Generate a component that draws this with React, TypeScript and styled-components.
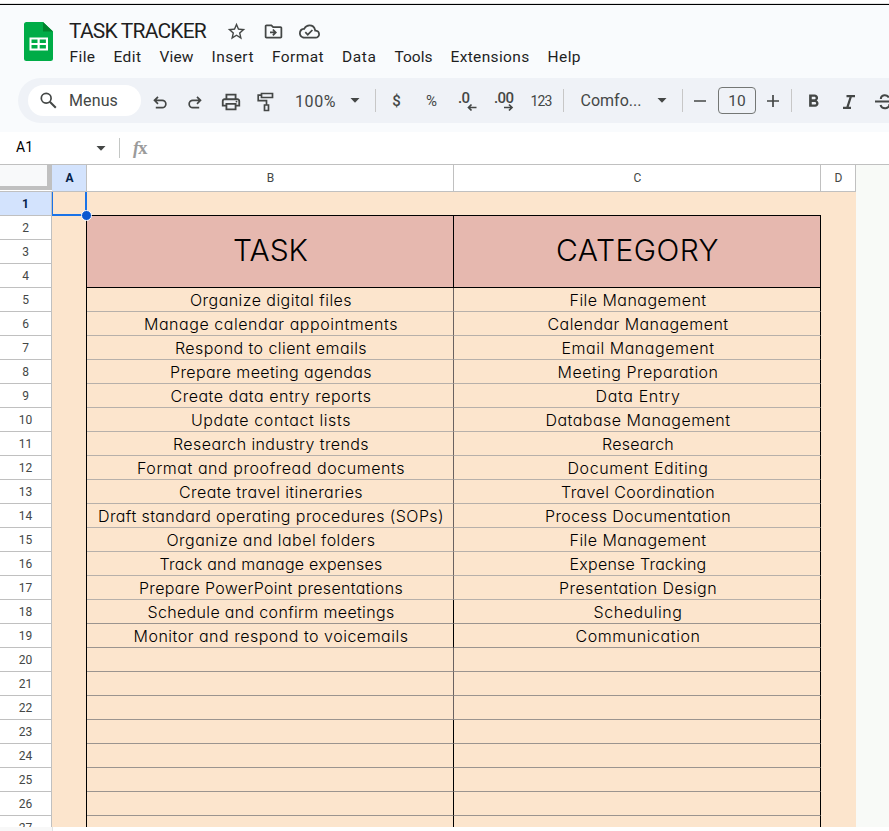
import React, { useLayoutEffect, useRef, useState } from "react";
import styled, { createGlobalStyle } from "styled-components";
import { MdStarBorder, MdOutlineDriveFileMove, MdOutlineCloudDone, MdOutlinePrint, MdFormatBold } from "react-icons/md";

const GlobalStyle = createGlobalStyle`
  * { box-sizing: border-box; }
  body { margin: 0; background: #fff; overflow: hidden; }
  svg { flex: none; overflow: visible; }
`;

const Page = styled.div`
  width: 889px;
  height: 831px;
  overflow: hidden;
  display: flex;
  flex-direction: column;
  background: #fff;
  font-family: Roboto, "Liberation Sans", sans-serif;
  color: #1f1f1f;
`;

const TopEdge = styled.div`
  height: 5px;
  flex: none;
  border-bottom: 1px solid #000;
  background: linear-gradient(#fff 3px, #e2e2e2 3px);
`;

const Header = styled.header`
  height: 127px;
  flex: none;
  background: #f9fbfd;
  display: flex;
  flex-direction: column;
`;

const Brand = styled.div`
  display: flex;
  height: 73px;
  padding-left: 24px;
`;

const Logo = styled.svg`
  width: 29px;
  height: 39px;
  margin: 17px 16px 0 0;
`;

const BrandText = styled.div`
  display: flex;
  flex-direction: column;
`;

const TitleRow = styled.div`
  display: flex;
  align-items: center;
  height: 28px;
  margin-top: 12px;
  font-size: 21px;
  color: #1f1f1f;
`;

const TitleIcon = styled.span<{ $gap: number }>`
  display: flex;
  margin-left: ${(p) => p.$gap}px;
  color: #444746;
`;

const MenuRow = styled.nav`
  display: flex;
  align-items: center;
  height: 22px;
  margin-top: 1px;
  padding-left: 0.5px;
  gap: 18px;
  font-size: 15.5px;
`;

const Toolbar = styled.div`
  display: flex;
  align-items: center;
  height: 45px;
  margin-left: 18px;
  padding-left: 10px;
  border-radius: 23px 0 0 23px;
  background: #eff2f7;
  color: #444746;
  overflow: hidden;
`;

const SearchPill = styled.div`
  display: flex;
  align-items: center;
  flex: none;
  width: 113px;
  height: 31px;
  margin-right: 1px;
  padding-left: 12px;
  gap: 12px;
  border-radius: 16px;
  background: #fff;
  font-size: 16px;
`;

const Slot = styled.div<{ $w: number; $size?: number; $weight?: number; $drop?: number }>`
  display: flex;
  flex: none;
  align-items: center;
  justify-content: center;
  width: ${(p) => p.$w}px;
  height: 30px;
  padding-top: ${(p) => p.$drop ?? 0}px;
  font-size: ${(p) => p.$size ?? 16}px;
  font-weight: ${(p) => p.$weight ?? 400};
`;

const Separator = styled.div<{ $before: number }>`
  flex: none;
  width: 1px;
  height: 23px;
  margin-left: ${(p) => p.$before}px;
  background: #c7c7c7;
`;

const SizeBox = styled.div`
  display: flex;
  flex: none;
  align-items: center;
  justify-content: center;
  width: 38px;
  height: 27px;
  margin-left: 1px;
  border: 1px solid #747775;
  border-radius: 4px;
  font-size: 15.5px;
`;

const FormulaBar = styled.div`
  display: flex;
  align-items: center;
  flex: none;
  height: 33px;
  border-bottom: 1px solid #c0c0c0;
  background: #fff;
`;

const CellName = styled.div`
  width: 80px;
  padding: 0 0 2px 16px;
  font-size: 14px;
  color: #000;
`;

const CaretCell = styled.div`
  display: flex;
  justify-content: center;
  width: 42px;
`;

const BarDivider = styled.div`
  width: 1px;
  height: 20px;
  margin: 0 13px 0 -3px;
  background: #c4c7c5;
`;

const FxMark = styled.div`
  display: flex;
  align-items: baseline;
  font-family: "Liberation Serif", serif;
  font-style: italic;
  font-weight: 700;
  font-size: 18px;
  line-height: 20px;
  color: #9b9b9b;
`;

const FxVariable = styled.span`
  font-style: normal;
  font-size: 19px;
  font-weight: 700;
  margin-left: -1px;
`;

const columns = "52px 35px 367px 367px 35px 1fr";

const ColumnHeads = styled.div`
  display: grid;
  grid-template-columns: ${columns};
  flex: none;
  height: 27px;
  background: #f8faf7;
  font-size: 12px;
`;

const Corner = styled.div`
  display: flex;
  flex-direction: column;
  background: #fff;
  border-bottom: 1px solid #c0c0c0;
`;

const CornerTop = styled.div`
  height: 21px;
  border-right: 5px solid #c0c0c0;
  background: #f8f9fa;
`;

const CornerBar = styled.div`
  height: 4px;
  background: #c0c0c0;
`;

const ColumnHead = styled.div<{ $on?: boolean }>`
  display: flex;
  align-items: center;
  justify-content: center;
  padding-left: 1px;
  border-right: 1px solid #c0c0c0;
  border-bottom: 1px solid #c0c0c0;
  background: ${(p) => (p.$on ? "#d3e3fd" : "#fff")};
  color: ${(p) => (p.$on ? "#041e49" : "#444746")};
  font-weight: ${(p) => (p.$on ? 700 : 400)};
`;

const Sheet = styled.div`
  display: grid;
  grid-template-columns: ${columns};
  grid-template-rows: repeat(27, 24px);
  flex: none;
  height: 635px;
  overflow: hidden;
  background: #f8faf7;
`;

const RowHead = styled.div<{ $row: number }>`
  grid-column: 1;
  grid-row: ${(p) => p.$row};
  display: flex;
  align-items: center;
  justify-content: center;
  border-right: 1px solid #c0c0c0;
  border-bottom: 1px solid #c0c0c0;
  background: ${(p) => (p.$row === 1 ? "#d3e3fd" : "#fff")};
  color: ${(p) => (p.$row === 1 ? "#041e49" : "#444746")};
  font-size: 12px;
  font-weight: ${(p) => (p.$row === 1 ? 700 : 400)};
`;

const Selected = styled.div`
  grid-area: 1 / 2;
  position: relative;
  z-index: 1;
  border: solid #1a73e8;
  border-width: 0 2px 2px 1px;
  background: #fce5cd;
`;

const FillHandle = styled.div`
  position: absolute;
  right: -7px;
  bottom: -7px;
  width: 11px;
  height: 11px;
  border: 1px solid #fff;
  border-radius: 50%;
  background: #0b57d0;
`;

const Margin = styled.div<{ $area: string; $edge?: string }>`
  grid-area: ${(p) => p.$area};
  background: #fce5cd;
  ${(p) => p.$edge && `border-${p.$edge}: 1px solid #000;`}
`;

const HeadingCell = styled.div<{ $col: number }>`
  grid-area: 2 / ${(p) => p.$col} / span 3;
  display: flex;
  align-items: center;
  justify-content: center;
  padding: 0 0 4px 1px;
  border-right: 1px solid #000;
  border-bottom: 1px solid #000;
  background: #e6b8af;
  color: #000;
  font-family: Inter, sans-serif;
  font-size: 30px;
  font-weight: 300;
`;

const Cell = styled.div<{ $row: number; $col: number; $side: string }>`
  grid-area: ${(p) => p.$row} / ${(p) => p.$col};
  display: flex;
  align-items: center;
  justify-content: center;
  padding: 0 0 0 2px;
  border-right: 1px solid ${(p) => p.$side};
  border-bottom: 1px solid ${(p) => (p.$row < 18 ? "#b7b0aa" : "#9b948f")};
  background: #fce5cd;
  color: #000;
  font-family: Inter, sans-serif;
  font-feature-settings: "cv11", "calt" 0;
  font-size: 16px;
  font-weight: 350;
`;

const Footer = styled.div`
  width: 53px;
  height: 4px;
  border-right: 1px solid #e3e3e3;
  background: #f8f8f8;
`;

const Label = styled.span`
  display: inline-block;
  flex: none;
  white-space: pre;
`;

/* A label whose tracking is adjusted so that it spans the given width. */
function Fit({ w, children }: { w: number; children: string }) {
  const ref = useRef<HTMLSpanElement>(null);
  const [track, setTrack] = useState(0);
  useLayoutEffect(() => {
    if (ref.current) setTrack((w - ref.current.getBoundingClientRect().width) / children.length);
  }, [w, children]);
  return <Label ref={ref} style={{ letterSpacing: track }}>{children}</Label>;
}

const Caret = () => (
  <svg width="10" height="5" viewBox="0 0 10 5"><path d="M.5 0h9L5 4.7z" fill="#444746" /></svg>
);

const stroke = { fill: "none", stroke: "#444746", strokeWidth: 1.7 };

const menus: [string, number][] = [
  ["File", 26], ["Edit", 28], ["View", 34], ["Insert", 42.5], ["Format", 52],
  ["Data", 34.5], ["Tools", 38], ["Extensions", 79], ["Help", 33.5],
];

const tasks: [string, number, string, number][] = [
  ["Organize digital files", 162, "File Management", 137],
  ["Manage calendar appointments", 254, "Calendar Management", 181],
  ["Respond to client emails", 192, "Email Management", 153],
  ["Prepare meeting agendas", 202, "Meeting Preparation", 161],
  ["Create data entry reports", 201, "Data Entry", 85],
  ["Update contact lists", 160, "Database Management", 185],
  ["Research industry trends", 196, "Research", 72],
  ["Format and proofread documents", 268, "Document Editing", 141],
  ["Create travel itineraries", 184, "Travel Coordination", 154],
  ["Draft standard operating procedures (SOPs)", 346, "Process Documentation", 186],
  ["Organize and label folders", 209, "File Management", 137],
  ["Track and manage expenses", 223, "Expense Tracking", 137],
  ["Prepare PowerPoint presentations", 264, "Presentation Design", 158],
  ["Schedule and confirm meetings", 247, "Scheduling", 89],
  ["Monitor and respond to voicemails", 275, "Communication", 125],
];

const rows = Array.from({ length: 27 }, (_, i) => i + 1);
const dividerColor = (row: number) => (row < 18 || (row > 19 && row < 23) ? "#6a6260" : "#000");

export default function App() {
  return (
    <Page>
      <GlobalStyle />
      <TopEdge />
      <Header>
        <Brand>
          <Logo viewBox="0 0 29 39">
            <path d="M2.5 0H19l10 9.5v27a2.5 2.5 0 0 1-2.500 2.500h-24A2.500 2.500 0 0 1 0 36.500v-34A2.500 2.500 0 0 1 2.500 0z" fill="#00ac47" />
            <path d="M19 0l10 9.500H19z" fill="#00832d" />
            <path fillRule="evenodd" d="M5.500 15.500h18.500v13H5.500zM7.500 17.500v3.400h6v-3.400zM15.700 17.500v3.400h6.200v-3.400zM7.500 23v3.500h6V23zM15.700 23v3.500h6.200V23z" fill="#fff" />
          </Logo>
          <BrandText>
            <TitleRow>
              <Fit w={137}>TASK TRACKER</Fit>
              <TitleIcon $gap={20}><MdStarBorder size={21} /></TitleIcon>
              <TitleIcon $gap={16}><MdOutlineDriveFileMove size={21} /></TitleIcon>
              <TitleIcon $gap={15}><MdOutlineCloudDone size={21} /></TitleIcon>
            </TitleRow>
            <MenuRow>{menus.map(([name, w]) => <Fit key={name} w={w}>{name}</Fit>)}</MenuRow>
          </BrandText>
        </Brand>
        <Toolbar>
          <SearchPill>
            <svg width="17" height="17" viewBox="0 0 17 17" {...stroke}><circle cx="6.200" cy="6.200" r="4.900" /><path d="M9.800 9.800l6 6" strokeWidth="2" /></svg>
            <Fit w={49}>Menus</Fit>
          </SearchPill>
          <Slot $w={36} $drop={3}>
            <svg width="14" height="13" viewBox="0 0 14 13" {...stroke}><path d="M5 .8L1.500 4.300 5 7.800M1.500 4.300h7.700a3.500 3.500 0 0 1 0 7.300H2.800" /></svg>
          </Slot>
          <Slot $w={34} $drop={3}>
            <svg width="14" height="13" viewBox="0 0 14 13" {...stroke}><path d="M9 .8l3.500 3.500L9 7.800M12.500 4.300H4.800a3.500 3.500 0 0 0 0 7.300h6.400" /></svg>
          </Slot>
          <Slot $w={38} $drop={2}><MdOutlinePrint size={22} /></Slot>
          <Slot $w={30} $drop={2}>
            <svg width="17" height="20" viewBox="0 0 17 20" {...stroke}><path d="M4.500 1.500h11v4h-11zM4.500 3.200H1.200v5.500h8.300v4M7.500 13h4v5.500h-4z" /></svg>
          </Slot>
          <Slot $w={71} $drop={2}><Fit w={41}>100%</Fit></Slot>
          <Slot $w={8}><Caret /></Slot>
          <Separator $before={16} />
          <Slot $w={41} $size={15} $weight={500}>$</Slot>
          <Slot $w={31} $size={15}><Fit w={13}>%</Fit></Slot>
          <Slot $w={40}>
            <svg width="20" height="20" viewBox="0 0 20 20" fill="#444746">
              <text x="0" y="12" fontSize="15" fontWeight="500" textLength="12">.0</text>
              <path d="M10.500 16.500h8M13.500 13.500l-3 3 3 3" {...stroke} />
            </svg>
          </Slot>
          <Slot $w={32}>
            <svg width="20" height="20" viewBox="0 0 20 20" fill="#444746">
              <text x="0" y="12" fontSize="15" fontWeight="500" textLength="20">.00</text>
              <path d="M10 16.500h8M15 13.500l3 3-3 3" {...stroke} />
            </svg>
          </Slot>
          <Slot $w={42} $size={14}><Fit w={21}>123</Fit></Slot>
          <Separator $before={1} />
          <Slot $w={94}><Fit w={61}>Comfo...</Fit></Slot>
          <Slot $w={7}><Caret /></Slot>
          <Separator $before={17} />
          <Slot $w={34}><svg width="12" height="12" viewBox="0 0 12 12" {...stroke}><path d="M0 6h12" /></svg></Slot>
          <SizeBox>10</SizeBox>
          <Slot $w={34}><svg width="12" height="12" viewBox="0 0 12 12" {...stroke}><path d="M0 6h12M6 0v12" /></svg></Slot>
          <Separator $before={1} />
          <Slot $w={42} $drop={2}><MdFormatBold size={21} /></Slot>
          <Slot $w={29} $drop={2}>
            <svg width="12" height="14" viewBox="0 0 12 14" {...stroke} strokeWidth="2.200"><path d="M3.500 1.200H12M0 12.800h8M8 1.200L4.200 12.800" /></svg>
          </Slot>
          <Slot $w={44} $drop={2}>
            <svg width="20" height="16" viewBox="0 0 20 16" {...stroke} strokeWidth="2"><path d="M0 7.500h20M5.800 5C6 .5 12 .2 13.800 3.600M5.500 11c1.500 4.800 9.500 4.200 8.800-1" /></svg>
          </Slot>
        </Toolbar>
      </Header>
      <FormulaBar>
        <CellName>A1</CellName>
        <CaretCell><Caret /></CaretCell>
        <BarDivider />
        <FxMark>f<FxVariable>x</FxVariable></FxMark>
      </FormulaBar>
      <ColumnHeads>
        <Corner><CornerTop /><CornerBar /></Corner>
        <ColumnHead $on>A</ColumnHead>
        <ColumnHead>B</ColumnHead>
        <ColumnHead>C</ColumnHead>
        <ColumnHead>D</ColumnHead>
      </ColumnHeads>
      <Sheet>
        {rows.map((r) => <RowHead key={r} $row={r}>{r}</RowHead>)}
        <Selected><FillHandle /></Selected>
        <Margin $area="1 / 3 / 2 / 5" $edge="bottom" />
        <Margin $area="1 / 5 / 28 / 6" />
        <Margin $area="2 / 2 / 28 / 3" $edge="right" />
        <HeadingCell $col={3}><Fit w={75}>TASK</Fit></HeadingCell>
        <HeadingCell $col={4}><Fit w={163}>CATEGORY</Fit></HeadingCell>
        {rows.slice(4).map((r) => {
          const t = tasks[r - 5];
          return (
            <React.Fragment key={r}>
              <Cell $row={r} $col={3} $side={dividerColor(r)}>{t && <Fit w={t[1]}>{t[0]}</Fit>}</Cell>
              <Cell $row={r} $col={4} $side="#000">{t && <Fit w={t[3]}>{t[2]}</Fit>}</Cell>
            </React.Fragment>
          );
        })}
      </Sheet>
      <Footer />
    </Page>
  );
}
